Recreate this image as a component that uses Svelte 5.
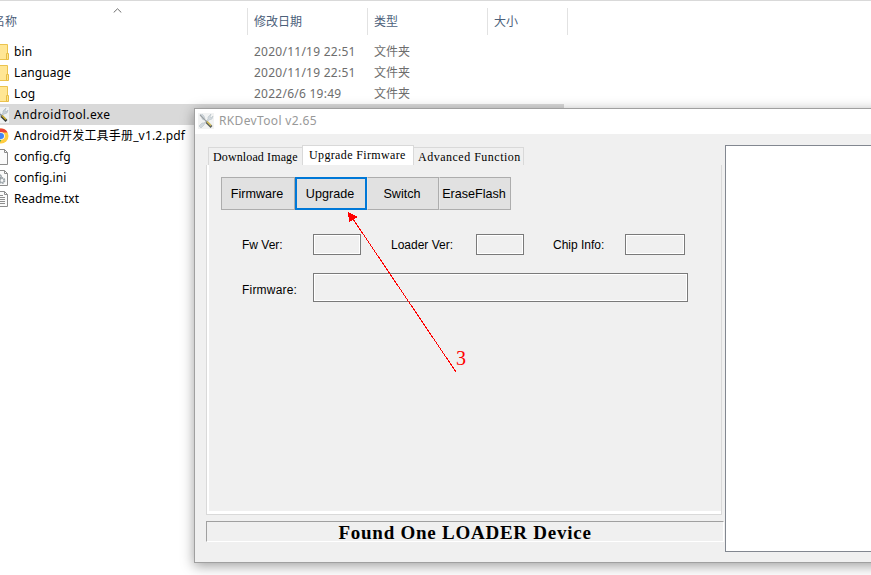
<script>
  const files = [
    { name: 'bin', icon: 'folder', date: '2020/11/19 22:51', ls: 0.1 },
    { name: 'Language', icon: 'folder', date: '2020/11/19 22:51', ls: 0.1 },
    { name: 'Log', icon: 'folder', date: '2022/6/6 19:49', ls: 0.1 },
    { name: 'AndroidTool.exe', icon: 'tool', selected: true, ls: 0.36 },
    { name: 'Android开发工具手册_v1.2.pdf', icon: 'chrome', ls: 0.17 },
    { name: 'config.cfg', icon: 'file', ls: 0.13 },
    { name: 'config.ini', icon: 'gear', ls: 0.05 },
    { name: 'Readme.txt', icon: 'text', ls: 0.05 }
  ];
</script>

{#snippet tools()}
  <path d="M2 1 4 4 4 6 6 7 7 6 6 3 4 1M12 2 10 4 10 6 6 10 4 10 1 13 3 15 6 12 7 10 11 7 14 6 15 3 13 5 12 4 13 1Z" fill="#c7d0d7" stroke="#aab5bd" stroke-width=".6" />
  <path d="M2 2 9 9" stroke="#83898c" stroke-width="1.1" />
  <path d="m8.5 9 5 5" stroke="#343a35" stroke-width="2.6" />
  <path d="m9 8.500 4 4" stroke="#d9ba35" stroke-width="1.5" />
{/snippet}

{#snippet icon(kind)}
  <svg class="icon" width="16" height="16" viewBox="0 0 16 16" fill="none" aria-hidden="true">
    {#if kind === 'folder'}
      <path d="M0 .5h14.5v15H0Z" fill="#ffe694" stroke="#ebc34e" />
      <path d="M13.5 9.5h2v6h-2Z" fill="#ffe48a" stroke="#e6bd45" />
    {:else if kind === 'tool'}
      <rect width="16" height="16" fill="#eef1f2" />
      {@render tools()}
    {:else if kind === 'chrome'}
      <circle cx="8" cy="8" r="7.5" fill="#ffcd40" />
      <path d="M1.500 4.2A7.5 7.5 0 0 1 14.6 4.5H8L4.8 9.5Z" fill="#ea4335" />
      <path d="M1.5 4.2 5 10l3.5 1.5-2 3.8A7.5 7.5 0 0 1 1.5 4.2" fill="#34a853" />
      <circle cx="8" cy="8" r="3.8" fill="#fff" />
      <circle cx="8" cy="8" r="3" fill="#4285f4" />
    {:else}
      <path d="M2 .5h9.5l3 3v12H2Z" fill="#fafafa" stroke="#8c8c8c" />
      <path d="M11.5.5v3h3" stroke="#8c8c8c" />
      {#if kind === 'gear'}
        <circle cx="9" cy="10.5" r="2.5" stroke="#9aa2a7" stroke-width="1.8" stroke-dasharray="1.5 .7" />
        <circle cx="9" cy="10.5" r="2" stroke="#a3abb0" />
        <circle cx="6.5" cy="6.5" r="1.7" stroke="#8d959b" stroke-width="1.3" />
      {:else if kind === 'text'}
        <path d="M3 4.5h7M3 6.5h9M3 8.5h9M3 10.5h9M3 12.5h9" stroke="#8e8e8e" />
      {/if}
    {/if}
  </svg>
{/snippet}

<main>
  <header>
    <div class="col name"><span>名称</span>
      <svg class="sort" width="9" height="5" viewBox="0 0 9 5" fill="none"><path d="M.7 4.5 4.5.8l3.8 3.7" stroke="#6b6b6b" /></svg>
    </div>
    <div class="col">修改日期</div>
    <div class="col">类型</div>
    <div class="col size">大小</div>
  </header>
  <div class="list">
    {#each files as f}
      <div class="row" class:selected={f.selected}>
        {@render icon(f.icon)}
        <span class="fname" style="letter-spacing: {f.ls}px">{f.name}</span>
        {#if f.date}
          <span class="date">{f.date}</span>
          <span class="kind">文件夹</span>
        {/if}
      </div>
    {/each}
  </div>

  <section class="window">
    <div class="title">
      <svg class="wicon" width="16" height="16" viewBox="0 0 16 16" fill="none"><rect width="16" height="16" fill="#f0f1f1" />{@render tools()}</svg>
      <span>RKDevTool v2.65</span>
    </div>
    <div class="body">
      <div class="left">
        <div class="tabs">
          <div class="tab t1"><span>Download Image</span></div>
          <div class="tab active"><span>Upgrade Firmware</span></div>
          <div class="tab t3"><span>Advanced Function</span></div>
        </div>
        <div class="panel">
          <div class="buttons">
            <button class="b1">Firmware</button>
            <button class="focus">Upgrade</button>
            <button>Switch</button>
            <button>EraseFlash</button>
          </div>
          <div class="fields">
            <span class="l1">Fw Ver:</span><i class="box"></i>
            <span class="l2">Loader Ver:</span><i class="box"></i>
            <span class="l3">Chip Info:</span><i class="box chip"></i>
          </div>
          <div class="fields fw">
            <span class="l1">Firmware:</span><i class="box path"></i>
          </div>
        </div>
        <div class="status"><span>Found One LOADER Device</span></div>
      </div>
      <div class="log"></div>
    </div>
  </section>

  <svg class="arrow" width="112" height="164" viewBox="347 210 112 164" fill="none">
    <path d="M351 216 456 372" stroke="#f00" shape-rendering="crispEdges" />
    <path d="M348 212 358 217 349 222Z" fill="#f00" shape-rendering="crispEdges" />
  </svg>
  <span class="mark">3</span>
</main>

<style>
  :global(body) { background: #fff; overflow: hidden; }
  main {
    position: relative; width: 871px; height: 575px; overflow: hidden;
    box-sizing: border-box; border-top: 1px solid #d9d9d9; background: #fff;
    font: 12px/21px "Noto Sans", "Noto Sans CJK SC", sans-serif; color: #000;
  }
  main * { box-sizing: border-box; white-space: nowrap; }
  header { display: flex; height: 40px; padding-top: 7px; color: #4c607a; font-size: 12px; line-height: 27px; }
  .col { width: 120px; height: 27px; border-right: 1px solid #e2e2e2; padding-left: 6px; }
  .col.name { position: relative; width: 248px; padding: 0; }
  .name span { margin-left: -7px; }
  .col.size { width: 80px; }
  .sort { position: absolute; left: 113px; top: 0; }
  .row { display: flex; width: 564px; height: 21px; align-items: center; }
  .selected { background: #d9d9d9; }
  .icon { margin-left: -7px; flex: none; }
  .fname { width: 245px; padding-left: 5px; }
  .date, .kind { color: #6d6d6d; }
  .date { width: 120px; letter-spacing: .25px; }
  .window {
    position: absolute; left: 194px; top: 107px; width: 700px; height: 455px;
    border: 1px solid #a0a0a0; background: #f0f0f0;
    box-shadow: 0 3px 12px rgba(0, 0, 0, .38);
    font-family: "Liberation Sans", sans-serif;
  }
  .title { display: flex; height: 25px; padding: 4px 0 0 3px; background: #fff; color: #999; font: 12px/16px "Noto Sans", sans-serif; }
  .title span { margin-left: 5px; letter-spacing: .35px; }
  .wicon { opacity: .8; }
  .body { display: flex; padding: 11px 0 0 11px; }
  .left { width: 519px; }
  .tabs { display: flex; align-items: flex-end; height: 20px; padding-left: 2px; font: 12px/18px "Liberation Serif", serif; }
  .tab { height: 18px; border: 1px solid #d9d9d9; border-bottom: 0; padding-left: 4px; }
  .t1 { width: 94px; border-right: 0; letter-spacing: .12px; }
  .tab.active { width: 112px; height: 20px; padding-left: 6px; background: #fff; letter-spacing: .36px; }
  .t3 { width: 110px; border-left: 0; letter-spacing: .5px; }
  .panel {
    width: 516px; height: 350px; padding: 12px 0 0 12px;
    border: 1px solid #d9d9d9; border-top: 0; background: #f0f0f0;
    box-shadow: inset 2px 0 #fff, inset 0 -3px #fff;
  }
  .buttons { display: flex; margin-left: 2px; height: 33px; }
  button { width: 72px; height: 33px; padding: 0 2px 0 0; border: 1px solid #adadad; border-left-color: #e8e8e8; background: #e1e1e1; color: #000; font: 12.6px "Liberation Sans", sans-serif; }
  button.b1 { width: 74px; border-left-color: #adadad; }
  button.focus { border: 2px solid #0078d7; }
  .fields { display: flex; margin: 24px 0 0 23px; height: 21px; font-size: 12px; line-height: 23px; }
  .fields.fw { margin-top: 18px; height: 29px; line-height: 35px; }
  .fw .l1 { letter-spacing: .2px; }
  .l1 { width: 71px; }
  .l2 { width: 85px; margin-left: 30px; }
  .l3 { width: 72px; margin-left: 29px; }
  .box { display: block; width: 48px; height: 21px; border: 1px solid #7a7a7a; box-shadow: inset 0 0 0 1px #fff; }
  .box.chip { width: 60px; }
  .box.path { width: 375px; height: 29px; }
  .status {
    display: flex; justify-content: center; width: 518px; height: 21px; margin-top: 6px;
    border: 1px solid; border-color: #a0a0a0 #fff #fff #a0a0a0;
    font: bold 19px/22px "Liberation Serif", serif; letter-spacing: .75px;
  }
  .log { flex: 1; height: 407px; border: 1px solid #828790; background: #fff; }
  .arrow { position: absolute; left: 347px; top: 209px; }
  .mark { position: absolute; left: 456px; top: 346px; color: #f00; font: 20px/22px "Liberation Serif", serif; }
</style>
